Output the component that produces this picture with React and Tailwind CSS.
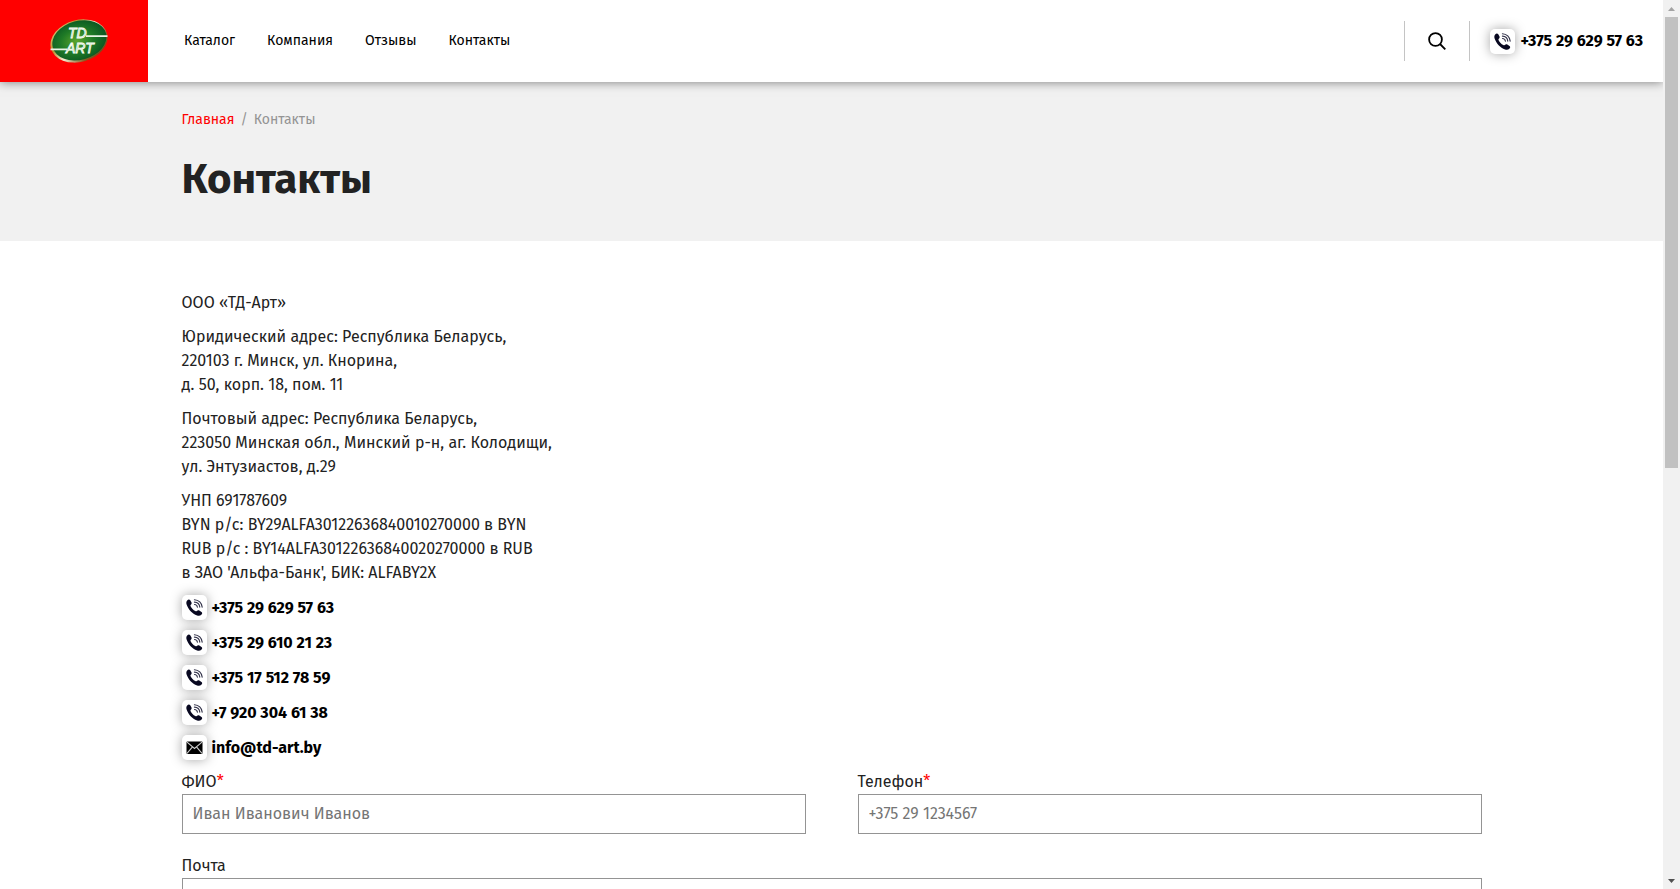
const navLinks = ["Каталог", "Компания", "Отзывы", "Контакты"];

const contacts = [
    { text: "+375 29 629 57 63", href: "tel:+375296295763" },
    { text: "+375 29 610 21 23", href: "tel:+375296102123" },
    { text: "+375 17 512 78 59", href: "tel:+375175127859" },
    { text: "+7 920 304 61 38", href: "tel:+79203046138" },
    { text: "info@td-art.by", href: "mailto:info@td-art.by", mail: true },
];

function Logo() {
    return (
        <svg width="60" height="44" viewBox="0 0 60 44" role="img" aria-label="TD ART">
            <defs>
                <radialGradient id="green" cx="45%" cy="50%" r="60%">
                    <stop offset="0" stopColor="#5aa52c" />
                    <stop offset="0.5" stopColor="#1f7a26" />
                    <stop offset="1" stopColor="#075022" />
                </radialGradient>
                <linearGradient id="gold" x1="0" y1="0" x2="1" y2="1">
                    <stop offset="0" stopColor="#e8dca0" />
                    <stop offset="0.3" stopColor="#b98d2c" />
                    <stop offset="0.5" stopColor="#f3ecd0" />
                    <stop offset="0.75" stopColor="#8a5a20" />
                    <stop offset="1" stopColor="#5a3a14" />
                </linearGradient>
            </defs>
            <g transform="rotate(-15 30 22)">
                <ellipse cx="30" cy="22" rx="29" ry="21" fill="url(#gold)" />
                <ellipse cx="30.5" cy="21.5" rx="27.5" ry="19.5" fill="url(#green)" />
            </g>
            <path d="M37 17.2h21.5M1.5 30.3H18" stroke="#e9f3e4" strokeWidth="1.8" />
            <g fill="#8cc47a" stroke="#fff" strokeWidth="0.8" fontFamily="Liberation Sans, sans-serif" fontStyle="italic" fontSize="14">
                <text x="19" y="19">TD</text>
                <text x="17" y="34">ART</text>
            </g>
        </svg>
    );
}

function PhoneIcon() {
    return (
        <svg width="17" height="17" viewBox="0 0 17 17" aria-hidden="true">
            <path
                d="M1.2 1.4C2.1.3 3.4.2 4.1 1.1l1.3 2.1c.5.9.3 1.7-.6 2.5-.5.5-.5.9-.2 1.5 1.1 2 2.6 3.7 4.7 4.9.6.4 1 .3 1.5-.2.8-.8 1.6-.9 2.5-.4l2.2 1.4c.9.7.9 1.7.1 2.5-1.2 1.2-2.7 1.6-4.5 1C6.2 14.7 2.3 10.4.6 5.4.1 3.8.3 2.5 1.2 1.4z"
                fill="#080820"
            />
            <path
                d="M8.4.7c4.2.1 7.5 3.3 7.8 7.4M8.4 3.1c2.9.1 5.1 2.2 5.4 5M8.5 5.5c1.6.1 2.7 1.2 2.9 2.7"
                fill="none"
                stroke="#33334a"
                strokeWidth="1.1"
                strokeLinecap="round"
            />
        </svg>
    );
}

function MailIcon() {
    return (
        <svg width="17" height="17" viewBox="0 0 17 17" aria-hidden="true">
            <rect x="0.5" y="2.5" width="16" height="12.5" rx="1" fill="#000" />
            <path d="M1 3.2l7.5 6.3L16 3.2M1 14.4l5.3-6.2M16 14.4l-5.3-6.2" fill="none" stroke="#ccc" strokeWidth="1.1" />
        </svg>
    );
}

function ContactLink({ text, href, mail }) {
    return (
        <a href={href} className="flex items-center gap-[5px] font-bold text-black whitespace-nowrap">
            <span className="flex size-[25px] items-center justify-center rounded-[5px] bg-white shadow-[0_0_12px_rgba(0,0,0,0.35)]">
                {mail ? <MailIcon /> : <PhoneIcon />}
            </span>
            {text}
        </a>
    );
}

function Field({ id, label, required, ...props }) {
    return (
        <div>
            <label htmlFor={id} className="block">
                {label}
                {required && <span className="text-[#ff0000]">*</span>}
            </label>
            <input
                id={id}
                className="block h-10 w-full border border-[#949494] bg-white px-[10px] pb-0.5 placeholder:text-[#757575]"
                {...props}
            />
        </div>
    );
}

function Scrollbar() {
    return (
        <div className="flex w-[17px] shrink-0 flex-col items-center bg-[#f1f1f1]" aria-hidden="true">
            <div className="flex h-[17px] items-center">
                <svg width="7" height="4" viewBox="0 0 7 4" fill="#a3a3a3"><path d="M0 4 3.5 0 7 4z" /></svg>
            </div>
            <div className="flex w-[13px] flex-1 flex-col">
                <div className="h-[52.8%] bg-[#c1c1c1]" />
            </div>
            <div className="flex h-[17px] items-center">
                <svg width="7" height="4" viewBox="0 0 7 4" fill="#505050"><path d="M0 0 3.5 4 7 0z" /></svg>
            </div>
        </div>
    );
}

export default function App() {
    return (
        <div className="flex h-screen bg-white font-['Fira_Sans',sans-serif] text-base text-[#222222]">
            <div className="min-w-0 flex-1 overflow-hidden">
                <header className="relative z-10 flex h-[82px] items-center bg-white shadow-[0_0_10px_rgba(0,0,0,0.5)]">
                    <a href="/" className="flex h-full w-[148px] items-center justify-center bg-[#ff0000] pl-[10px]">
                        <Logo />
                    </a>
                    <nav className="flex flex-1 gap-8 pl-9 text-sm text-black">
                        {navLinks.map((link) => (
                            <a key={link} href="#">{link}</a>
                        ))}
                    </nav>
                    <button
                        type="button"
                        aria-label="Поиск"
                        className="flex h-10 w-[66px] items-center justify-center border-x border-[#c4c4c4]"
                    >
                        <svg width="18" height="18" viewBox="0 0 18 18" fill="none" stroke="#000" strokeWidth="1.8">
                            <circle cx="7.5" cy="7.5" r="6.4" />
                            <path d="M12 12l5.3 5.3" />
                        </svg>
                    </button>
                    <div className="px-5">
                        <ContactLink {...contacts[0]} />
                    </div>
                </header>

                <section className="bg-[#f1f1f1] pt-[27px] pb-[37px]">
                    <div className="mx-auto max-w-[1300px]">
                        <div className="mb-[23px] flex gap-1.5 text-sm leading-[22px] text-[#949494]">
                            <a href="/" className="text-[#ff0000]">Главная</a>
                            <span>/</span>
                            <span>Контакты</span>
                        </div>
                        <h1 className="text-[42px] leading-[50px] font-bold">Контакты</h1>
                    </div>
                </section>

                <main className="mx-auto max-w-[1300px] pt-[50px]">
                    <div className="space-y-[10px]">
                        <p>ООО «ТД-Арт»</p>
                        <p>
                            Юридический адрес: Республика Беларусь,<br />
                            220103 г. Минск, ул. Кнорина,<br />
                            д. 50, корп. 18, пом. 11
                        </p>
                        <p>
                            Почтовый адрес: Республика Беларусь,<br />
                            223050 Минская обл., Минский р-н, аг. Колодищи,<br />
                            ул. Энтузиастов, д.29
                        </p>
                        <p>
                            УНП 691787609<br />
                            BYN р/с: BY29ALFA30122636840010270000 в BYN<br />
                            RUB р/с : BY14ALFA30122636840020270000 в RUB<br />
                            в ЗАО 'Альфа-Банк', БИК: ALFABY2X
                        </p>
                        <ul className="space-y-[10px]">
                            {contacts.map((c) => (
                                <li key={c.text} className="flex">
                                    <ContactLink {...c} />
                                </li>
                            ))}
                        </ul>
                    </div>
                    <form className="mt-[10px] grid grid-cols-2 gap-x-[52px] gap-y-5">
                        <Field id="name" label="ФИО" required placeholder="Иван Иванович Иванов" />
                        <Field id="phone" label="Телефон" required type="tel" placeholder="+375 29 1234567" />
                        <div className="col-span-2">
                            <Field id="email" label="Почта" type="email" />
                        </div>
                    </form>
                </main>
            </div>
            <Scrollbar />
        </div>
    );
}
